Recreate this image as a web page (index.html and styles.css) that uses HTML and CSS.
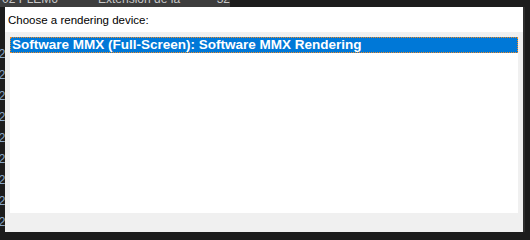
FILE: index.html
```html
<!DOCTYPE html>
<html lang="en">
<head>
  <meta charset="UTF-8" />
  <title>Choose a rendering device</title>
  <link rel="stylesheet" href="styles.css">
</head>
<body>
  <!-- explorer row peeking out behind the dialog -->
  <div class="behind-top">
    <div class="row-hl">
      <span class="col-date">02 PLEM6</span>
      <span class="col-type">Extensión de la aplic</span>
      <span class="col-size">32 KB</span>
    </div>
  </div>

  <div class="middle">
    <div class="behind-left">
      <span>02</span><span>02</span><span>02</span><span>02</span><span>02</span><span>02</span><span>02</span><span>02</span><span>02</span><span>02</span>
    </div>

    <div class="dialog">
      <div class="label">Choose a rendering device:</div>
      <div class="body">
        <ul class="devices">
          <li class="selected">Software MMX (Full-Screen): Software MMX Rendering</li>
        </ul>
      </div>
    </div>
    <div class="behind-right"></div>
  </div>

  <div class="behind-bottom"></div>
</body>
</html>
```

FILE: styles.css
```css
* {
  box-sizing: border-box;
}

body {
  margin: 0;
  width: 530px;
  height: 240px;
  overflow: hidden;
  background: #1c1c1c;
  font-family: 'Liberation Sans', Arial, sans-serif;
}

.behind-top {
  height: 7px;
  overflow: hidden;
  display: flex;
}

.row-hl {
  width: 230px;
  height: 7px;
  overflow: hidden;
  background: #3d3d3d;
  display: flex;
  align-items: flex-start;
  color: #c8c8c8;
  font-size: 12px;
  line-height: 14px;
}

.row-hl span {
  margin-top: -8px;
}

.col-date { width: 98px; padding-left: 2px; flex-shrink: 0; }
.col-type { width: 100px; flex-shrink: 0; }
.col-size { width: 32px; text-align: right; flex-shrink: 0; }

.middle {
  display: flex;
  height: 225px;
}

.behind-left {
  width: 5px;
  overflow: hidden;
  display: flex;
  flex-direction: column;
  gap: 7px;
  padding-top: 40px;
  font-size: 12px;
  line-height: 14px;
  color: #8aa7c8;
}

.behind-left span {
  margin-left: -8px;
}

.dialog {
  width: 520px;
  display: flex;
  flex-direction: column;
  background: #f0f0f0;
  border-right: 2px solid #2e2e2e;
}

.label {
  height: 25px;
  background: #ffffff;
  padding: 7px 0 0 3px;
  font-size: 11.5px;
  color: #000;
}

.body {
  flex: 1;
  padding: 5px 5px 19px 5px;
}

.devices {
  margin: 0;
  padding: 0;
  list-style: none;
  background: #ffffff;
  height: 100%;
}

.devices li {
  height: 16px;
  padding-left: 1px;
  font-weight: bold;
  font-size: 13.5px;
  line-height: 14px;
  color: #000;
}

.devices li.selected {
  background: #0078d7;
  color: #ffffff;
  border: 1px dotted #f08a24;
}

.behind-right {
  flex: 1;
}

.behind-bottom {
  height: 8px;
}
```
